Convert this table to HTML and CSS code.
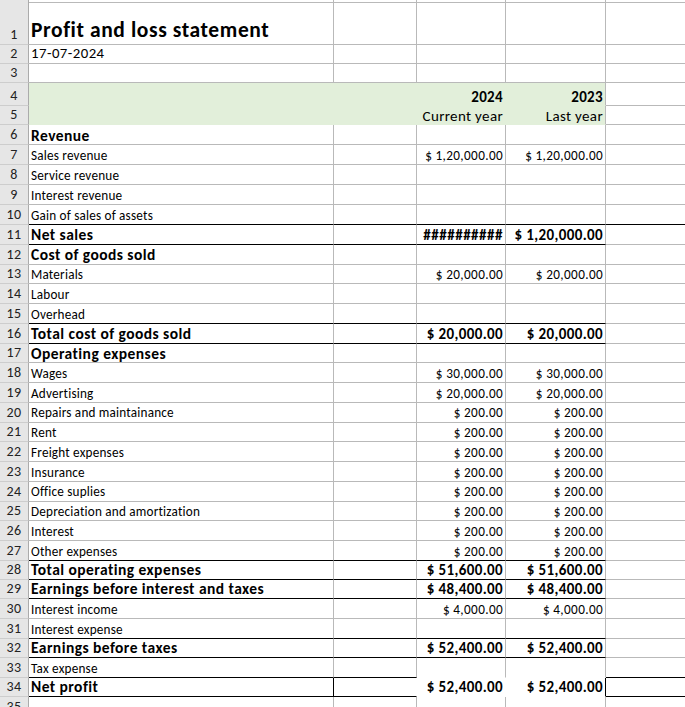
FILE: index.html
```html
<!DOCTYPE html>
<html>
<head>
<meta charset="utf-8">
<title>Profit and loss statement</title>
<link rel="stylesheet" href="styles.css">
</head>
<body>
<div class="sheet">
  <div class="row r2"><div class="n"></div><div class="ca"></div><div class="cb"></div><div class="cc"></div><div class="cd"></div><div class="ce"></div></div>
  <div class="row r43"><div class="n"><span class="num">1</span></div><div class="ca"><span class="title">Profit and loss statement</span></div><div class="cb"></div><div class="cc"></div><div class="cd"></div><div class="ce"></div></div>
  <div class="row r19"><div class="n"><span class="num">2</span></div><div class="ca"><span class="date">17-07-2024</span></div><div class="cb"></div><div class="cc"></div><div class="cd"></div><div class="ce"></div></div>
  <div class="row r19"><div class="n"><span class="num">3</span></div><div class="ca"></div><div class="cb"></div><div class="cc"></div><div class="cd"></div><div class="ce"></div></div>
  <div class="row r23 ry"><div class="n"><span class="num">4</span></div><div class="ca g"></div><div class="cb g"></div><div class="cc g"><span class="yr">2024</span></div><div class="cd g gr"><span class="yr">2023</span></div><div class="ce"></div></div>
  <div class="row r19 ry"><div class="n"><span class="num">5</span></div><div class="ca g"></div><div class="cb g"></div><div class="cc g"><span class="yrs">Current year</span></div><div class="cd g gr"><span class="yrs">Last year</span></div><div class="ce"></div></div>
  <div class="row r20"><div class="n"><span class="num">6</span></div><div class="ca"><span class="lb">Revenue</span></div><div class="cb"></div><div class="cc"></div><div class="cd"></div><div class="ce"></div></div>
  <div class="row r20"><div class="n"><span class="num">7</span></div><div class="ca"><span class="l">Sales revenue</span></div><div class="cb"></div><div class="cc"><span class="v">$ 1,20,000.00</span></div><div class="cd"><span class="v">$ 1,20,000.00</span></div><div class="ce"></div></div>
  <div class="row r20"><div class="n"><span class="num">8</span></div><div class="ca"><span class="l">Service revenue</span></div><div class="cb"></div><div class="cc"></div><div class="cd"></div><div class="ce"></div></div>
  <div class="row r20"><div class="n"><span class="num">9</span></div><div class="ca"><span class="l">Interest revenue</span></div><div class="cb"></div><div class="cc"></div><div class="cd"></div><div class="ce"></div></div>
  <div class="row r20"><div class="n"><span class="num">10</span></div><div class="ca kb"><span class="l">Gain of sales of assets</span></div><div class="cb kb"></div><div class="cc kb"></div><div class="cd kb"></div><div class="ce kb"></div></div>
  <div class="row rf"><div class="n"><span class="num">11</span></div><div class="ca kb"><span class="lb">Net sales</span></div><div class="cb kb"></div><div class="cc kb"><span class="vb hash">##########</span></div><div class="cd kb"><span class="vb">$ 1,20,000.00</span></div><div class="ce"></div></div>
  <div class="row rf"><div class="n"><span class="num">12</span></div><div class="ca"><span class="lb">Cost of goods sold</span></div><div class="cb"></div><div class="cc"></div><div class="cd"></div><div class="ce"></div></div>
  <div class="row rf"><div class="n"><span class="num">13</span></div><div class="ca"><span class="l">Materials</span></div><div class="cb"></div><div class="cc"><span class="v">$ 20,000.00</span></div><div class="cd"><span class="v">$ 20,000.00</span></div><div class="ce"></div></div>
  <div class="row rf"><div class="n"><span class="num">14</span></div><div class="ca"><span class="l">Labour</span></div><div class="cb"></div><div class="cc"></div><div class="cd"></div><div class="ce"></div></div>
  <div class="row rf"><div class="n"><span class="num">15</span></div><div class="ca kb"><span class="l">Overhead</span></div><div class="cb kb"></div><div class="cc kb"></div><div class="cd kb"></div><div class="ce"></div></div>
  <div class="row rf"><div class="n"><span class="num">16</span></div><div class="ca kb"><span class="lb">Total cost of goods sold</span></div><div class="cb kb"></div><div class="cc kb"><span class="vb">$ 20,000.00</span></div><div class="cd kb"><span class="vb">$ 20,000.00</span></div><div class="ce"></div></div>
  <div class="row rf"><div class="n"><span class="num">17</span></div><div class="ca"><span class="lb">Operating expenses</span></div><div class="cb"></div><div class="cc"></div><div class="cd"></div><div class="ce"></div></div>
  <div class="row rf"><div class="n"><span class="num">18</span></div><div class="ca"><span class="l">Wages</span></div><div class="cb"></div><div class="cc"><span class="v">$ 30,000.00</span></div><div class="cd"><span class="v">$ 30,000.00</span></div><div class="ce"></div></div>
  <div class="row rf"><div class="n"><span class="num">19</span></div><div class="ca"><span class="l">Advertising</span></div><div class="cb"></div><div class="cc"><span class="v">$ 20,000.00</span></div><div class="cd"><span class="v">$ 20,000.00</span></div><div class="ce"></div></div>
  <div class="row rf"><div class="n"><span class="num">20</span></div><div class="ca"><span class="l">Repairs and maintainance</span></div><div class="cb"></div><div class="cc"><span class="v">$ 200.00</span></div><div class="cd"><span class="v">$ 200.00</span></div><div class="ce"></div></div>
  <div class="row rf"><div class="n"><span class="num">21</span></div><div class="ca"><span class="l">Rent</span></div><div class="cb"></div><div class="cc"><span class="v">$ 200.00</span></div><div class="cd"><span class="v">$ 200.00</span></div><div class="ce"></div></div>
  <div class="row rf"><div class="n"><span class="num">22</span></div><div class="ca"><span class="l">Freight expenses</span></div><div class="cb"></div><div class="cc"><span class="v">$ 200.00</span></div><div class="cd"><span class="v">$ 200.00</span></div><div class="ce"></div></div>
  <div class="row rf"><div class="n"><span class="num">23</span></div><div class="ca"><span class="l">Insurance</span></div><div class="cb"></div><div class="cc"><span class="v">$ 200.00</span></div><div class="cd"><span class="v">$ 200.00</span></div><div class="ce"></div></div>
  <div class="row rf"><div class="n"><span class="num">24</span></div><div class="ca"><span class="l">Office suplies</span></div><div class="cb"></div><div class="cc"><span class="v">$ 200.00</span></div><div class="cd"><span class="v">$ 200.00</span></div><div class="ce"></div></div>
  <div class="row rf"><div class="n"><span class="num">25</span></div><div class="ca"><span class="l">Depreciation and amortization</span></div><div class="cb"></div><div class="cc"><span class="v">$ 200.00</span></div><div class="cd"><span class="v">$ 200.00</span></div><div class="ce"></div></div>
  <div class="row rf"><div class="n"><span class="num">26</span></div><div class="ca"><span class="l">Interest</span></div><div class="cb"></div><div class="cc"><span class="v">$ 200.00</span></div><div class="cd"><span class="v">$ 200.00</span></div><div class="ce"></div></div>
  <div class="row rf"><div class="n"><span class="num">27</span></div><div class="ca kb"><span class="l">Other expenses</span></div><div class="cb kb"></div><div class="cc kb"><span class="v">$ 200.00</span></div><div class="cd kb"><span class="v">$ 200.00</span></div><div class="ce"></div></div>
  <div class="row r19"><div class="n"><span class="num">28</span></div><div class="ca kb"><span class="lb">Total operating expenses</span></div><div class="cb kb"></div><div class="cc kb"><span class="vb">$ 51,600.00</span></div><div class="cd kb"><span class="vb">$ 51,600.00</span></div><div class="ce"></div></div>
  <div class="row r19"><div class="n"><span class="num">29</span></div><div class="ca kb"><span class="lb">Earnings before interest and taxes</span></div><div class="cb kb"></div><div class="cc kb"><span class="vb">$ 48,400.00</span></div><div class="cd kb"><span class="vb">$ 48,400.00</span></div><div class="ce"></div></div>
  <div class="row r20"><div class="n"><span class="num">30</span></div><div class="ca"><span class="l">Interest income</span></div><div class="cb"></div><div class="cc"><span class="v">$ 4,000.00</span></div><div class="cd"><span class="v">$ 4,000.00</span></div><div class="ce"></div></div>
  <div class="row r20"><div class="n"><span class="num">31</span></div><div class="ca kb"><span class="l">Interest expense</span></div><div class="cb kb"></div><div class="cc kb"></div><div class="cd kb"></div><div class="ce"></div></div>
  <div class="row r19"><div class="n"><span class="num">32</span></div><div class="ca kb"><span class="lb">Earnings before taxes</span></div><div class="cb kb"></div><div class="cc kb"><span class="vb">$ 52,400.00</span></div><div class="cd kb"><span class="vb">$ 52,400.00</span></div><div class="ce"></div></div>
  <div class="row r20"><div class="n"><span class="num">33</span></div><div class="ca kb"><span class="l">Tax expense</span></div><div class="cb kb"></div><div class="cc wb"></div><div class="cd wb"></div><div class="ce kb"></div></div>
  <div class="row r19"><div class="n"><span class="num">34</span></div><div class="ca kb kr"><span class="lb">Net profit</span></div><div class="cb kb wr"></div><div class="cc wb wr"><span class="vb">$ 52,400.00</span></div><div class="cd wb kr"><span class="vb">$ 52,400.00</span></div><div class="ce kb"></div></div>
  <div class="row r20"><div class="n"><span class="num">35</span></div><div class="ca"></div><div class="cb"></div><div class="cc"></div><div class="cd"></div><div class="ce"></div></div>
</div>
</body>
</html>
```
FILE: styles.css
```css
* { box-sizing: border-box; margin: 0; padding: 0; }
body { margin: 0; background: #fff; overflow: hidden; font-family: Calibri, Carlito, Lato, "Open Sans", sans-serif; color: #000; }
.sheet { width: 685px; height: 707px; overflow: hidden; }
.row { display: flex; }
.r2 { height: 2px; }
.r43 { height: 43px; }
.r23 { height: 23px; }
.r19 { height: 19px; }
.r20 { height: 20px; }
.rf { height: 19.765px; }
.row > div {
  flex: none;
  display: flex;
  align-items: flex-end;
  border-right: 1px solid #b9b9b9;
  border-bottom: 1px solid #b9b9b9;
  padding: 0 2px 2px 2px;
  line-height: 1;
  white-space: nowrap;
}
.row > .n { width: 29px; background: #e6e6e6; justify-content: center; border-right-color: #ababab; border-bottom-color: #cdcdcd; padding: 0 0 2px 0; }
.row > .ca { width: 305px; }
.row > .cb { width: 83px; }
.row > .cc { width: 89px; justify-content: flex-end; }
.row > .cd { width: 100px; justify-content: flex-end; }
.row > .ce { width: 110px; }
.r43 > .ca { padding-bottom: 3px; }
.ry > .g { padding-bottom: 0; }
.row > .g { background: #e2efda; border-color: #e2efda; }
.row > .gr { border-right-color: #b9b9b9; }
.row > .kb { border-bottom-color: #000; }
.row > .kr { border-right-color: #000; }
.row > .wb { border-bottom-color: #fff; }
.row > .wr { border-right-color: #fff; }
.num { font-size: 14px; letter-spacing: 0.3px; color: #222; }
.title { font-size: 21.5px; font-weight: 700; letter-spacing: 0.6px; }
.date { font-size: 14.8px; letter-spacing: 0.45px; }
.l { font-size: 13.2px; letter-spacing: 0.2px; }
.lb { font-size: 15.5px; font-weight: 700; letter-spacing: 0.45px; position: relative; top: 1px; }
.v { font-size: 13.2px; letter-spacing: 0.37px; }
.vb { font-size: 15px; font-weight: 700; letter-spacing: 0.38px; position: relative; top: 1px; }
.hash { letter-spacing: 0.5px; }
.yr { font-size: 15px; font-weight: 700; letter-spacing: 0.35px; }
.yrs { font-size: 15px; letter-spacing: 0.35px; }
```
